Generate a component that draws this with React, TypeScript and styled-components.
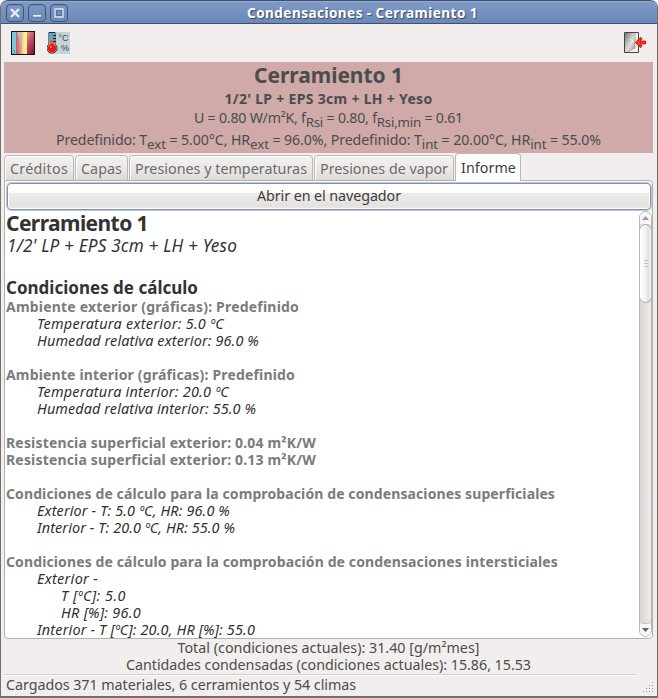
import React, { useLayoutEffect, useRef, useState } from 'react';
import styled, { createGlobalStyle, css } from 'styled-components';

const GlobalStyle = createGlobalStyle`
  * { box-sizing: border-box; }
  body { margin: 0; background: #fff; overflow: hidden; }
`;

const Frame = styled.div`
  width: 658px;
  height: 698px;
  display: flex;
  flex-direction: column;
  overflow: hidden;
  background: #f2eeed;
  border: 1px solid #73716c;
  border-top: 0;
  border-bottom: 2px solid #73716c;
  border-radius: 7px 7px 0 0;
  font-family: 'Noto Sans', 'Open Sans', sans-serif;
  font-size: 14.3px;
  color: #4c4c4c;
`;

const TitleBar = styled.header`
  flex: none;
  height: 24px;
  display: grid;
  grid-template-columns: 67px 1fr;
  align-items: center;
  background: linear-gradient(#7f9bc8, #7892c0 45%, #6b88b6);
  border: 1px solid #3f4f6c;
  border-width: 1px 0;
  box-shadow: inset 0 1px #93abd2;
  border-radius: 7px 7px 0 0;
`;

const WindowButtons = styled.div`
  display: flex;
  gap: 4px;
  padding-left: 5px;
`;

const WindowButton = styled.button`
  width: 18px;
  height: 18px;
  padding: 0;
  display: grid;
  place-items: center;
  border: 1px solid #3f5375;
  border-radius: 4px;
  background: linear-gradient(#7d98c5, #6c88b5);
  box-shadow: inset 0 0 0 1px #7590bd;
`;

const TitleText = styled.div`
  padding-left: 179px;
  line-height: 22px;
  padding-top: 1px;
  font-size: 13.6px;
  font-weight: 700;
  color: #fff;
  text-shadow: 1px 1px 1px #344766;
`;

const Toolbar = styled.div`
  flex: none;
  height: 38px;
  display: flex;
  align-items: center;
  gap: 11px;
  padding: 0 10px;
`;

const Spacer = styled.div`
  flex: 1;
`;

const Summary = styled.section`
  flex: none;
  height: 91px;
  margin: 0 4px 0 3px;
  background: #cfaaa9;
  text-align: center;
`;

const SummaryLine = styled.div<{ $size?: number; $h: number; $bold?: boolean }>`
  height: ${(p) => p.$h}px;
  line-height: ${(p) => p.$h}px;
  font-size: ${(p) => p.$size ?? 14.2}px;
  font-weight: ${(p) => (p.$bold ? 700 : 400)};
`;

const Sub = styled.sub`
  font-size: 13.3px;
  line-height: 0;
  vertical-align: -4px;
`;

const TabBar = styled.nav`
  flex: none;
  height: 28px;
  margin: 0 4px 0 3px;
  display: flex;
  align-items: flex-end;
  gap: 1px;
`;

const Tab = styled.div<{ $w: number; $active?: boolean }>`
  width: ${(p) => p.$w}px;
  height: 26px;
  line-height: 26px;
  padding-left: 5px;
  border: 1px solid #bdb8b4;
  border-radius: 4px 4px 0 0;
  background: linear-gradient(#f4f2f1, #e9e6e4 60%, #dedad7);
  box-shadow: inset 1px 1px #fff;
  color: #6b6b6b;
  ${(p) =>
    p.$active &&
    css`
      position: relative;
      height: 28px;
      line-height: 28px;
      background: #fff;
      border-bottom: 0;
      color: #3c3c3c;
      z-index: 1;
    `}
`;

const Panel = styled.main`
  flex: none;
  height: 459px;
  margin: -1px 4px 0 3px;
  display: flex;
  flex-direction: column;
  background: #fff;
  border: 1px solid #b5b0ac;
  border-radius: 0 4px 4px 4px;
`;

const OpenButton = styled.button`
  flex: none;
  height: 27px;
  margin: 2px 1px 0 2px;
  padding: 0 0 1px;
  border: 1px solid #7d92b5;
  border-radius: 4px;
  box-shadow: 0 0 0 1px #b9c6dc, inset 0 0 0 1px #fff;
  background: linear-gradient(#fdfdfd 0 35%, #eeecea 37%, #e4e1df 88%, #eceae8);
  font: inherit;
  line-height: 24px;
  color: #3c3c3c;
`;

const PanelBody = styled.div`
  flex: 1;
  min-height: 0;
  display: flex;
`;

const Report = styled.article`
  flex: 1;
  min-width: 0;
  padding-left: 1px;
  overflow: hidden;
`;

type Kind = 'title' | 'subtitle' | 'section' | 'strong' | 'item';

const kinds = {
  title: css`height: 25px; line-height: 26px; font-size: 21px; font-weight: 700; color: #333;`,
  subtitle: css`height: 42px; line-height: 22px; font-size: 17.2px; font-style: italic; color: #333;`,
  section: css`height: 21px; line-height: 21px; font-size: 17px; font-weight: 700; color: #333;`,
  strong: css`height: 17px; line-height: 17px; font-size: 14px; font-weight: 700; color: #7b7b7b;`,
  item: css`height: 17px; line-height: 17px; font-size: 14.4px; font-style: italic; color: #303030;`,
};

const ReportLine = styled.div<{ $kind: Kind; $indent: number }>`
  padding-left: ${(p) => p.$indent}px;
  ${(p) => kinds[p.$kind]}
`;

const ScrollTrack = styled.div`
  flex: none;
  width: 13px;
  margin: 1px 0 1px 0;
  display: flex;
  flex-direction: column;
  align-items: stretch;
  border: 1px solid #b9b5b1;
  border-radius: 7px;
  background: #e4e1df;
  overflow: hidden;
`;

const ScrollArrow = styled.div`
  flex: none;
  height: 12px;
  display: grid;
  place-items: center;
  background: #f8f7f7;
`;

const ScrollThumb = styled.div`
  flex: none;
  height: 79px;
  margin: 0 -1px;
  display: grid;
  place-items: center;
  border: 1px solid #aaa6a2;
  border-radius: 7px;
  background: linear-gradient(90deg, #fff 10%, #f5f4f4 45%, #e4e2df 75%, #f3f2f1);
`;

const ScrollGap = styled.div`
  flex: 1;
  border-bottom: 1px solid #c8c4c1;
  border-radius: 0 0 7px 7px;
  background: linear-gradient(90deg, #d8d5d2, #e7e5e3 60%, #efedec);
`;

const Totals = styled.div`
  flex: none;
  height: 35px;
  padding-right: 1px;
  text-align: center;
  line-height: 17px;
`;

const StatusBar = styled.footer`
  flex: 1;
  margin-left: 3px;
  display: flex;
  justify-content: space-between;
`;

const StatusText = styled.div`
  width: 632px;
  padding-left: 2px;
  line-height: 19px;
  border-top: 1px solid #d3cecb;
  box-shadow: inset 0 1px #fff;
`;

const Grip = styled.svg`
  align-self: flex-end;
  margin: 0 3px 3px 0;
`;

const Run = styled.span`
  display: inline-block;
  white-space: pre;
  text-align: left;
`;

/** Spreads its text evenly over a given width by adjusting the tracking. */
function Fit({ w, children }: { w: number; children: React.ReactNode }) {
  const ref = useRef<HTMLSpanElement>(null);
  const [track, setTrack] = useState(0);
  useLayoutEffect(() => {
    const el = ref.current;
    if (!el) return;
    const count = el.textContent?.length || 1;
    setTrack((w - el.getBoundingClientRect().width) / count);
  }, [w]);
  return (
    <Run ref={ref} style={{ letterSpacing: `${track}px` }}>
      {children}
    </Run>
  );
}

const LayersIcon = () => (
  <svg width="25" height="25" viewBox="0 0 25 25">
    <defs>
      <linearGradient id="red"><stop stopColor="#c95c60" /><stop offset="1" stopColor="#edaaa4" /></linearGradient>
      <linearGradient id="cut" x2="0" y2="1"><stop stopColor="#c5bfbd" /><stop offset="1" stopColor="#e09a94" /></linearGradient>
      <linearGradient id="wine" x2=".6" y2="1"><stop stopColor="#e09a98" /><stop offset=".5" stopColor="#c04a5c" /><stop offset="1" stopColor="#8f1232" /></linearGradient>
    </defs>
    <rect x="1" y="1" width="4" height="23" fill="#72cbe2" />
    <rect x="5" y="1" width="6" height="23" fill="url(#red)" />
    <path d="M6 1h5v18z" fill="url(#cut)" />
    <rect x="11" y="1" width="2" height="23" fill="#f0d9a4" />
    <rect x="13" y="1" width="3" height="23" fill="#fff27c" />
    <rect x="16" y="1" width="8" height="23" fill="url(#wine)" />
    <path d="M2 19l2 2-2 2M6 20l2 2" stroke="#328399" fill="none" strokeWidth=".8" />
    <rect x=".5" y=".5" width="23" height="23" fill="none" stroke="#171111" />
  </svg>
);

const IconLabel = styled.text`
  font: 9px 'Liberation Sans', sans-serif;
  fill: #40474b;
`;

const ClimateIcon = () => (
  <svg width="23" height="24" viewBox="0 0 23 24">
    <rect x="1" y="1" width="22" height="22" fill="#c5d2d9" />
    <path d="M2 1.5h6v11.7a5 5 0 1 1-6 0z" fill="#f5f8f9" stroke="#252a2e" />
    <path d="M2.8 2h4.4v8H2.8z" fill="#46aed3" />
    <path d="M3 9h4v5H3z" fill="#e86036" />
    <circle cx="5" cy="17.3" r="4.3" fill="#ef1515" />
    <circle cx="3.8" cy="16" r="1" fill="#ff9686" />
    <path d="M6 4.5h3M6 7.5h3M6 10.5h3" stroke="#202a30" />
    <IconLabel x="11.5" y="9.5">°C</IconLabel>
    <IconLabel x="14" y="19.5">%</IconLabel>
  </svg>
);

const ExitIcon = () => (
  <svg width="23" height="22" viewBox="0 0 23 22">
    <defs>
      <linearGradient id="door" x2="1" y2="1"><stop stopColor="#777" /><stop offset=".55" stopColor="#ddd" /><stop offset="1" stopColor="#999" /></linearGradient>
    </defs>
    <path d="M.5.5h14v20H.5z" fill="#f0f0ef" stroke="#454545" />
    <path d="M1 1h10v15L3 20H1z" fill="url(#door)" />
    <path d="M11 1v15l-8 4" fill="none" stroke="#8a8a88" strokeWidth=".6" />
    <path d="M6 7l3 2-2 3" stroke="#eee" fill="none" />
    <path d="M11.3 10.4l5.2-5.2 1.6 1.6-2.1 2.3h5.7v2.8H16l2.1 2.2-1.6 1.6z" fill="#f13d20" stroke="#bd1508" />
  </svg>
);

const report: { kind: Kind; indent: number; w: number; text: string }[] = [
  { kind: 'title', indent: 0, w: 142, text: 'Cerramiento 1' },
  { kind: 'subtitle', indent: 1, w: 230, text: "1/2' LP + EPS 3cm + LH + Yeso" },
  { kind: 'section', indent: 0, w: 192, text: 'Condiciones de cálculo' },
  { kind: 'strong', indent: 0, w: 293, text: 'Ambiente exterior (gráficas): Predefinido' },
  { kind: 'item', indent: 31, w: 187, text: 'Temperatura exterior: 5.0 ºC' },
  { kind: 'item', indent: 31, w: 222, text: 'Humedad relativa exterior: 96.0 %' },
  { kind: 'item', indent: 0, w: 0, text: '' },
  { kind: 'strong', indent: 0, w: 289, text: 'Ambiente interior (gráficas): Predefinido' },
  { kind: 'item', indent: 31, w: 192, text: 'Temperatura interior: 20.0 ºC' },
  { kind: 'item', indent: 31, w: 219, text: 'Humedad relativa interior: 55.0 %' },
  { kind: 'item', indent: 0, w: 0, text: '' },
  { kind: 'strong', indent: 0, w: 310, text: 'Resistencia superficial exterior: 0.04 m²K/W' },
  { kind: 'strong', indent: 0, w: 310, text: 'Resistencia superficial exterior: 0.13 m²K/W' },
  { kind: 'item', indent: 0, w: 0, text: '' },
  { kind: 'strong', indent: 0, w: 549, text: 'Condiciones de cálculo para la comprobación de condensaciones superficiales' },
  { kind: 'item', indent: 31, w: 193, text: 'Exterior - T: 5.0 ºC, HR: 96.0 %' },
  { kind: 'item', indent: 31, w: 198, text: 'Interior - T: 20.0 ºC, HR: 55.0 %' },
  { kind: 'item', indent: 0, w: 0, text: '' },
  { kind: 'strong', indent: 0, w: 552, text: 'Condiciones de cálculo para la comprobación de condensaciones intersticiales' },
  { kind: 'item', indent: 31, w: 61, text: 'Exterior -' },
  { kind: 'item', indent: 55, w: 65, text: 'T [ºC]: 5.0' },
  { kind: 'item', indent: 55, w: 80, text: 'HR [%]: 96.0' },
  { kind: 'item', indent: 31, w: 218, text: 'Interior - T [ºC]: 20.0, HR [%]: 55.0' },
];

const tabs = [
  { w: 70, fit: 58, label: 'Créditos' },
  { w: 53, fit: 41, label: 'Capas' },
  { w: 184, fit: 172, label: 'Presiones y temperaturas' },
  { w: 140, fit: 128, label: 'Presiones de vapor' },
  { w: 66, fit: 55, label: 'Informe', active: true },
];

const gripDots = [[9, 0], [6, 3], [9, 3], [3, 6], [6, 6], [9, 6], [0, 9], [3, 9], [6, 9], [9, 9]];

export default function App() {
  return (
    <>
      <GlobalStyle />
      <Frame>
        <TitleBar>
          <WindowButtons>
            <WindowButton aria-label="Cerrar">
              <svg width="10" height="10"><path d="M1 1l8 8M9 1L1 9" stroke="#e6ecf5" strokeWidth="2.4" /></svg>
            </WindowButton>
            <WindowButton aria-label="Minimizar">
              <svg width="10" height="10"><path d="M.5 6.5h9v2.500h-9z" fill="#eef2f8" stroke="#455b80" strokeWidth=".5" /></svg>
            </WindowButton>
            <WindowButton aria-label="Maximizar">
              <svg width="10" height="10"><path d="M1 1h8v8H1z" fill="none" stroke="#dfe7f2" strokeWidth="1.3" /><path d="M2.5 2.5h5v5h-5z" fill="none" stroke="#4c628a" strokeWidth=".8" /></svg>
            </WindowButton>
          </WindowButtons>
          <TitleText><Fit w={231}>Condensaciones - Cerramiento 1</Fit></TitleText>
        </TitleBar>

        <Toolbar>
          <LayersIcon />
          <ClimateIcon />
          <Spacer />
          <ExitIcon />
        </Toolbar>

        <Summary>
          <SummaryLine $h={27} $size={21} $bold><Fit w={149}>Cerramiento 1</Fit></SummaryLine>
          <SummaryLine $h={20} $size={14} $bold><Fit w={208}>1/2' LP + EPS 3cm + LH + Yeso</Fit></SummaryLine>
          <SummaryLine $h={18}>
            <Fit w={269}>U = 0.80 W/m²K, f<Sub>Rsi</Sub> = 0.80, f<Sub>Rsi,min</Sub> = 0.61</Fit>
          </SummaryLine>
          <SummaryLine $h={26}>
            <Fit w={545}>
              Predefinido: T<Sub>ext</Sub> = 5.00°C, HR<Sub>ext</Sub> = 96.0%, Predefinido: T<Sub>int</Sub> = 20.00°C, HR<Sub>int</Sub> = 55.0%
            </Fit>
          </SummaryLine>
        </Summary>

        <TabBar>
          {tabs.map((t) => (
            <Tab key={t.label} $w={t.w} $active={t.active}><Fit w={t.fit}>{t.label}</Fit></Tab>
          ))}
        </TabBar>

        <Panel>
          <OpenButton><Fit w={144}>Abrir en el navegador</Fit></OpenButton>
          <PanelBody>
            <Report>
              {report.map((line, i) => (
                <ReportLine key={i} $kind={line.kind} $indent={line.indent}>
                  {line.text && <Fit w={line.w}>{line.text}</Fit>}
                </ReportLine>
              ))}
            </Report>
            <ScrollTrack>
              <ScrollArrow><svg width="7" height="4"><path d="M3.5 0L7 4H0z" fill="#a09c99" /></svg></ScrollArrow>
              <ScrollThumb><svg width="4" height="7"><path d="M0 .5h4M0 3.5h4M0 6.5h4" stroke="#c3c0be" /></svg></ScrollThumb>
              <ScrollGap />
              <ScrollArrow><svg width="7" height="4"><path d="M0 0h7L3.5 4z" fill="#656360" /></svg></ScrollArrow>
            </ScrollTrack>
          </PanelBody>
        </Panel>

        <Totals>
          <div><Fit w={302}>Total (condiciones actuales): 31.40 [g/m²mes]</Fit></div>
          <div><Fit w={405}>Cantidades condensadas (condiciones actuales): 15.86, 15.53</Fit></div>
        </Totals>
        <StatusBar>
          <StatusText><Fit w={350}>Cargados 371 materiales, 6 cerramientos y 54 climas</Fit></StatusText>
          <Grip width="11" height="11">
            {gripDots.map(([x, y]) => <rect key={`${x}-${y}`} x={x} y={y} width="1" height="1" fill="#96918e" />)}
          </Grip>
        </StatusBar>
      </Frame>
    </>
  );
}
